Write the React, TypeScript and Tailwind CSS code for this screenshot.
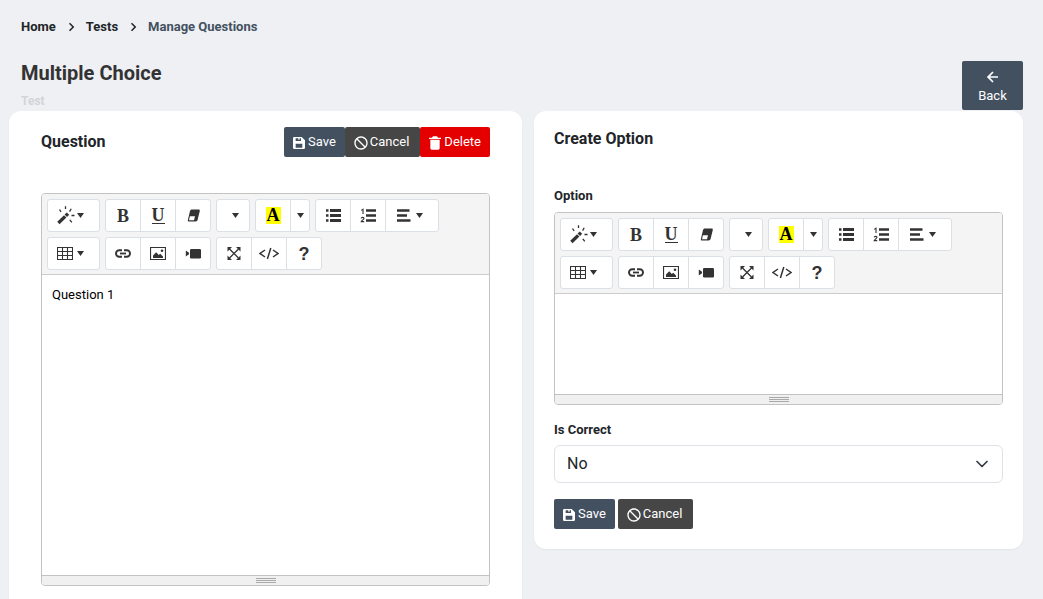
import type { ReactNode } from "react";
import { BiBlock, BiChevronRight, BiLeftArrowAlt, BiSolidSave, BiSolidTrashAlt } from "react-icons/bi";

type IconProps = { children: ReactNode; width?: number; height?: number };

// Toolbar icons are drawn on a 15px high grid unless they say otherwise
const Icon = ({ children, width = 16, height = 15 }: IconProps) => (
  <svg
    width={width}
    height={height}
    viewBox={`0 0 ${width} ${height}`}
    fill="none"
    stroke="currentColor"
    aria-hidden="true"
  >
    {children}
  </svg>
);

const Caret = () => (
  <svg width="7" height="5" viewBox="0 0 7 5" fill="currentColor" aria-hidden="true">
    <path d="M0 0h7L3.5 5z" />
  </svg>
);

const MagicIcon = () => (
  <Icon width={19} height={19}>
    <path d="M1.4 17 8.2 10.4" strokeWidth="3.4" />
    <path d="m8.8 9.8 2.2-2.2" strokeWidth="3.4" />
    <path d="m2.5 3.5 1.6 2.4M8.5.3v2.8M14.2 2.8l-1.6 2.8M14.5 9.5h3M12.8 13.8l2 2.6" strokeWidth="1.3" />
  </Icon>
);

const EraserIcon = () => (
  <Icon>
    <path
      d="M7 1.5h6.6c1 0 1.4.6 1.2 1.5l-2.2 8.8c-.2 1-.9 1.7-2 1.7H4.2c-1 0-1.5-.7-1.3-1.6L5 3.1c.3-1 .9-1.6 2-1.6zM4.9 8.3 4 12.2h5l1-3.9z"
      fill="currentColor"
      fillRule="evenodd"
      stroke="none"
    />
  </Icon>
);

const BulletsIcon = () => (
  <Icon>
    <path d="M5 2.5h11M5 7.5h11M5 12.5h11" strokeWidth="2.8" />
    <path d="M1 2.5h2.5M1 7.5h2.5M1 12.5h2.5" strokeWidth="2.6" />
  </Icon>
);

const NumbersIcon = () => (
  <Icon>
    <path d="M6 2.5h10M6 7.5h10M6 12.5h10" strokeWidth="2.6" />
    <path d="M1.2 2.4 3 1.2V6M1.2 10.4c.2-1.5 3-1.3 2.7.2-.2 1-2.4 2-2.7 3h3" strokeWidth="1.1" />
  </Icon>
);

const AlignIcon = () => (
  <Icon>
    <path d="M1 2.5h12.5M1 7.5h10M1 12.5h13.5" strokeWidth="2.4" />
  </Icon>
);

const TableIcon = () => (
  <Icon>
    <path d="M.5 1.5h15v12H.5zM.5 5.5h15M.5 9.5h15M5.5 1.5v12M10.5 1.5v12" strokeWidth="1.1" />
  </Icon>
);

const LinkIcon = () => (
  <Icon>
    <path d="M7 4.3H4.2a3.2 3.2 0 0 0 0 6.4H7M9 4.3h2.8a3.2 3.2 0 0 1 0 6.4H9" strokeWidth="1.9" />
    <path d="M5 7.5h6" strokeWidth="1.8" />
  </Icon>
);

const PictureIcon = () => (
  <Icon>
    <path d="M.5 1.5h15v12H.5z" strokeWidth="1.2" />
    <path d="M3 12V9.6l3.2-3.4L8.8 9l1.4-1.2L13 10.4V12z" fill="currentColor" stroke="none" />
    <circle cx="12" cy="4.8" r="1.3" fill="currentColor" stroke="none" />
  </Icon>
);

const VideoIcon = () => (
  <Icon>
    <rect x="5" y="3" width="11" height="9.5" rx="1.2" fill="currentColor" stroke="none" />
    <path d="M.8 4.5 4 6.8v1.4L.8 10.5z" fill="currentColor" stroke="none" />
  </Icon>
);

const FullscreenIcon = () => (
  <Icon>
    <path d="m3.5 3 9 9M12.5 3l-9 9" strokeWidth="1.3" />
    <path d="M1.5 5.5V1h4.5zM10 1h4.5v4.5zM1.5 9.5V14H6zM14.5 9.5V14H10z" fill="currentColor" stroke="none" />
  </Icon>
);

const CodeIcon = () => (
  <Icon width={20}>
    <path d="M6 4 1 7.5 6 11M14 4l5 3.5-5 3.5M11.8 2l-3.4 11" strokeWidth="1.5" />
  </Icon>
);

type ToolProps = { label: string; children?: ReactNode; className?: string };

const Tool = ({ label, children, className = "w-9" }: ToolProps) => (
  <button
    type="button"
    aria-label={label}
    className={`-ml-px flex h-[33px] items-center justify-center border border-[#dae0e5] bg-white text-[#333] first:ml-0 first:rounded-l-[3px] last:rounded-r-[3px] hover:bg-gray-100 ${className}`}
  >
    {children}
  </button>
);

const Group = ({ children }: { children: ReactNode }) => <div className="flex">{children}</div>;

const Toolbar = () => (
  <div className="flex flex-wrap gap-[5px] rounded-t-[3px] border-b border-[#ccc] bg-[#f4f4f4] p-[5px] pb-1">
    <Group>
      <Tool label="Style" className="w-[53px] gap-px pr-[6px]">
        <MagicIcon />
        <Caret />
      </Tool>
    </Group>
    <Group>
      <Tool label="Bold">
        <span className="font-['Liberation_Serif',serif] text-lg leading-4 font-bold">B</span>
      </Tool>
      <Tool label="Underline">
        <span className="border-b border-current font-['Liberation_Serif',serif] text-lg leading-4 font-bold">U</span>
      </Tool>
      <Tool label="Remove font style">
        <EraserIcon />
      </Tool>
    </Group>
    <Group>
      <Tool label="Font family" className="w-[34px] pl-1">
        <Caret />
      </Tool>
    </Group>
    <Group>
      <Tool label="Recent color">
        <span className="bg-[#ff0] px-px font-['Liberation_Serif',serif] text-lg leading-[17px] font-bold text-black">
          A
        </span>
      </Tool>
      <Tool label="More color" className="w-5">
        <Caret />
      </Tool>
    </Group>
    <Group>
      <Tool label="Unordered list">
        <BulletsIcon />
      </Tool>
      <Tool label="Ordered list">
        <NumbersIcon />
      </Tool>
      <Tool label="Paragraph" className="w-[54px] gap-1 pr-[6px]">
        <AlignIcon />
        <Caret />
      </Tool>
    </Group>
    <Group>
      <Tool label="Table" className="w-[53px] gap-1 pr-[6px]">
        <TableIcon />
        <Caret />
      </Tool>
    </Group>
    <Group>
      <Tool label="Link">
        <LinkIcon />
      </Tool>
      <Tool label="Picture">
        <PictureIcon />
      </Tool>
      <Tool label="Video">
        <VideoIcon />
      </Tool>
    </Group>
    <Group>
      <Tool label="Full screen">
        <FullscreenIcon />
      </Tool>
      <Tool label="Code view">
        <CodeIcon />
      </Tool>
      <Tool label="Help">
        <span className="font-['Liberation_Sans',sans-serif] text-lg leading-4 font-bold">?</span>
      </Tool>
    </Group>
  </div>
);

type EditorProps = { id: string; label?: string; value?: string; className: string };

const Editor = ({ id, label, value, className }: EditorProps) => (
  <div className="rounded-[4px] border border-[#c3c3c3]">
    <Toolbar />
    <textarea
      id={id}
      aria-label={label}
      defaultValue={value}
      className={`block w-full resize-none bg-white p-2.5 text-[13px] leading-5 text-black outline-none ${className}`}
    />
    <div className="flex h-2.5 flex-col items-center gap-px rounded-b-[3px] border-t border-[#c3c3c3] bg-[#f0f0f0] pt-[2px]">
      <span className="h-px w-5 bg-[#a9a9a9]" />
      <span className="h-px w-5 bg-[#a9a9a9]" />
      <span className="h-px w-5 bg-[#a9a9a9]" />
    </div>
  </div>
);

type ActionProps = { icon: ReactNode; children: ReactNode; className: string };

const Action = ({ icon, children, className }: ActionProps) => (
  <button
    type="button"
    className={`flex items-center gap-px rounded-[2px] py-[5px] text-[13px] leading-5 text-white ${className}`}
  >
    {icon}
    {children}
  </button>
);

const iconClass = "mt-[2px] size-4";

const SaveButton = () => (
  <Action icon={<BiSolidSave className={iconClass} />} className="bg-[#435060] pr-[9px] pl-[7px]">
    Save
  </Action>
);

const CancelButton = () => (
  <Action icon={<BiBlock className={iconClass} />} className="bg-[#464646] pr-[11px] pl-2">
    Cancel
  </Action>
);

export default function App() {
  return (
    <div className="min-h-screen bg-[#eef0f4] font-[Roboto,sans-serif] text-[#212529]">
      <header className="flex items-end justify-between pr-5 pl-[21px]">
        <div>
          <nav aria-label="Breadcrumb" className="flex items-center pt-[17px] text-[13px] leading-5 font-bold">
            <a href="#home">Home</a>
            <BiChevronRight className="mx-[6px] size-[18px]" />
            <a href="#tests">Tests</a>
            <BiChevronRight className="mx-[6px] size-[18px]" />
            <span aria-current="page" className="text-[#435060]">
              Manage Questions
            </span>
          </nav>
          <h1 className="mt-[22px] text-xl leading-7 font-bold text-[#333]">Multiple Choice</h1>
          <p className="mt-1 text-xs leading-5 font-bold text-[#d3d4d8]">Test</p>
        </div>
        <a
          href="#back"
          className="mb-px flex w-[61px] flex-col items-center rounded-[2px] bg-[#435060] pt-[6px] pb-[5px] text-[13px] leading-[18px] text-white"
        >
          <BiLeftArrowAlt className="size-5" />
          Back
        </a>
      </header>

      <main className="flex items-start gap-3 pr-5 pl-[9px]">
        <section className="flex-1 rounded-xl bg-white px-8 pt-4 pb-8 shadow-xs">
          <div className="mb-9 flex items-center justify-between">
            <h2 className="text-base leading-6 font-bold">Question</h2>
            <div className="flex">
              <SaveButton />
              <CancelButton />
              <Action icon={<BiSolidTrashAlt className={iconClass} />} className="bg-[#e40000] pr-[9px] pl-[7px]">
                Delete
              </Action>
            </div>
          </div>
          <Editor id="question" label="Question" value="Question 1" className="h-[300px]" />
        </section>

        <section className="flex-1 rounded-xl bg-white px-5 pt-4 pb-5 shadow-xs">
          <h2 className="text-base leading-6 font-bold">Create Option</h2>
          <label htmlFor="option" className="mt-[35px] mb-[6px] block text-[13px] leading-5 font-bold">
            Option
          </label>
          <Editor id="option" className="h-[100px]" />
          <label htmlFor="correct" className="mt-[15px] mb-[5px] block text-[13px] leading-5 font-bold">
            Is Correct
          </label>
          <div className="grid items-center">
            <select
              id="correct"
              className="col-start-1 row-start-1 h-[38px] w-full appearance-none rounded-md border border-[#dee2e6] bg-white px-3 text-base text-[#212529]"
            >
              <option>No</option>
              <option>Yes</option>
            </select>
            <svg
              viewBox="0 0 16 16"
              className="pointer-events-none col-start-1 row-start-1 mr-[13px] size-4 justify-self-end"
              fill="none"
              stroke="#343a40"
              strokeWidth="1.7"
              strokeLinecap="round"
              strokeLinejoin="round"
              aria-hidden="true"
            >
              <path d="m3 5.5 5 5 5-5" />
            </svg>
          </div>
          <div className="mt-4 flex gap-[3px]">
            <SaveButton />
            <CancelButton />
          </div>
        </section>
      </main>
    </div>
  );
}
